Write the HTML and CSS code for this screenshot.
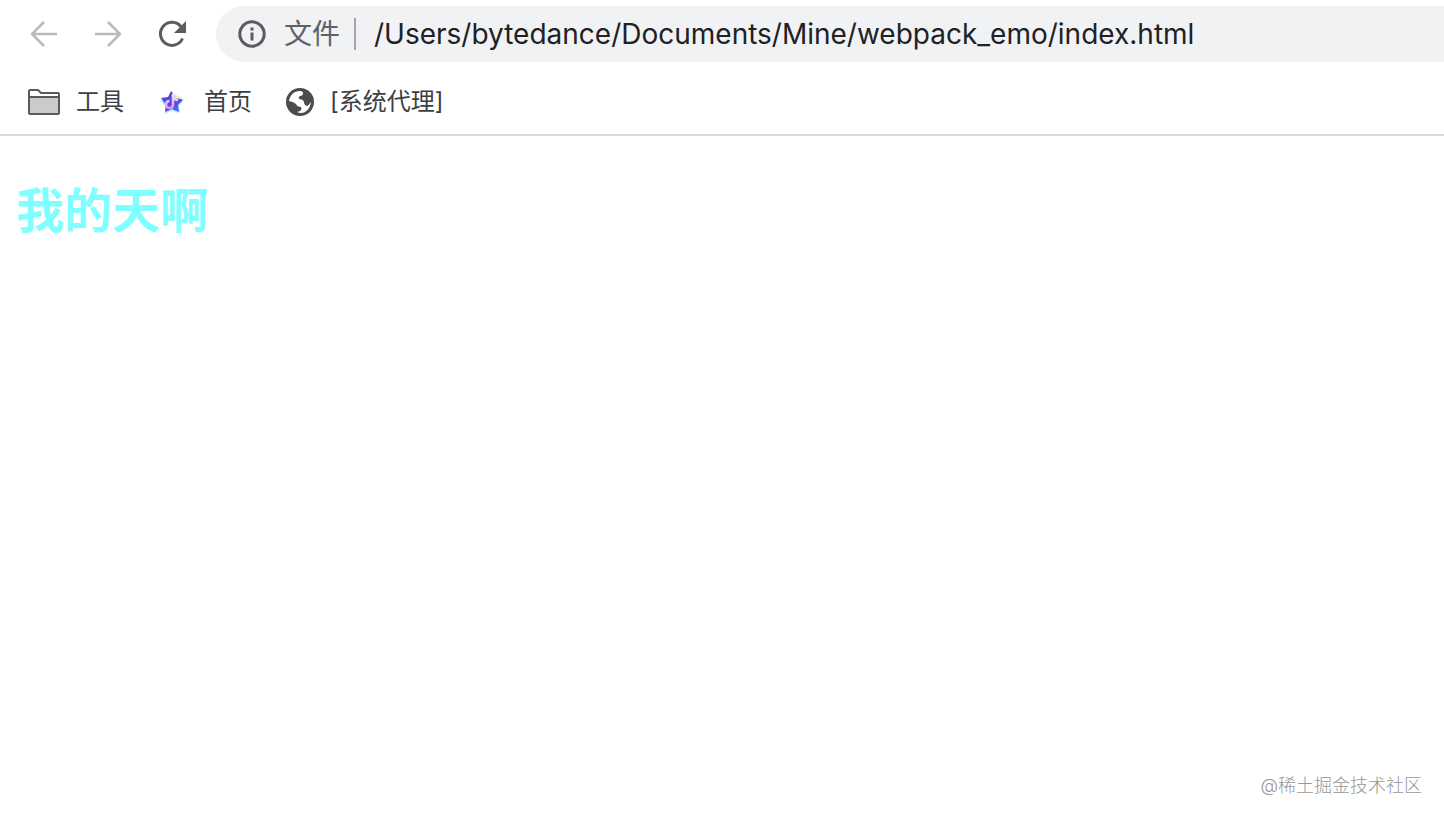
FILE: index.html
```
<!DOCTYPE html>
<html lang="zh-CN">
  <head>
    <meta charset="utf-8">
    <title>index.html</title>
    <link rel="stylesheet" href="styles.css">
  </head>
  <body>
    <header class="browser">
      <div class="toolbar">
        <button class="nav-button" type="button" aria-label="后退" disabled>
          <svg class="nav-icon" viewBox="0 0 32 32"><path d="M29 16H4M16 4L4 16l12 12"/></svg>
        </button>
        <button class="nav-button" type="button" aria-label="前进" disabled>
          <svg class="nav-icon" viewBox="0 0 32 32"><path d="M3 16h25M16 4l12 12-12 12"/></svg>
        </button>
        <button class="nav-button" type="button" aria-label="重新加载">
          <svg class="nav-icon reload" viewBox="0 0 32 32">
            <path d="M26.5 20.5A11.5 11.5 0 1 1 25 8.700"/>
            <path class="reload-head" d="M30 3v12H18z"/>
          </svg>
        </button>
        <div class="omnibox">
          <svg class="info-icon" viewBox="0 0 28 28">
            <circle cx="14" cy="14" r="12.200"/>
            <path d="M14 12.500v8M14 7.500v3"/>
          </svg>
          <label class="scheme" for="url">文件</label>
          <input class="url" id="url" type="text" value="/Users/bytedance/Documents/Mine/webpack_emo/index.html" spellcheck="false">
        </div>
      </div>
      <nav class="bookmarks">
        <a class="bookmark" href="#">
          <svg class="folder-icon" viewBox="0 0 32 26">
            <path fill="#fff" d="M1 9V2q0-1 1-1h8l3 3h17q1 0 1 1v4z"/>
            <path fill="#cbcbcb" d="M1 8h30v16q0 1-1 1H2q-1 0-1-1z"/>
          </svg>
          工具
        </a>
        <a class="bookmark bookmark-home" href="#">
          <svg class="star-icon" viewBox="0 0 24 24">
            <defs>
              <linearGradient id="star-fill" x1="0" y1="0" x2="1" y2="1">
                <stop offset="0" stop-color="#4a49e8"/>
                <stop offset="0.600" stop-color="#5548e2"/>
                <stop offset="1" stop-color="#4e8bff"/>
              </linearGradient>
              <linearGradient id="note-fill" x1="0" y1="0" x2="0" y2="1">
                <stop offset="0" stop-color="#f4f2ff"/>
                <stop offset="1" stop-color="#f08cf0"/>
              </linearGradient>
            </defs>
            <path fill="#a9efff" d="M12 1l4 6 8 2-5 7 1 7-8-2-7 3v-8l-5-6 8-2z"/>
            <path fill="url(#star-fill)" d="M11 1l4 6 8 3-5 5 1 7-7-3-7 3 1-7-5-7 7-1z"/>
            <path fill="#ffe3b5" d="M15 4l3 2 4 1-3 2-4-1z"/>
            <path fill="none" stroke="url(#note-fill)" stroke-width="2.500" d="M13 4v11a3.500 3.500 0 1 1-3.500-4M13 6q1 4 5 4"/>
          </svg>
          首页
        </a>
        <a class="bookmark" href="#">
          <svg class="globe-icon" viewBox="0 0 28 28">
            <circle cx="14" cy="14" r="14" fill="#4a4c4f"/>
            <path fill="#fff" d="M3 13C4 7 8 3 14 3q3 0 3 2 0 3-3 3-2 1-1 3 4 0 5 3 0 3 3 4 2-1 4-4-1 7-6 10-4 2-8 0l3-1q2-1 1-4-4 0-5-3-2-2-7-3z"/>
          </svg>
          [系统代理]
        </a>
      </nav>
    </header>

    <main class="page">
      <h1 class="title">我的天啊</h1>
    </main>
    <footer class="watermark">@稀土掘金技术社区</footer>
  </body>
</html>
```
FILE: styles.css
```
* { box-sizing: border-box; }

body {
  margin: 0;
  min-height: 100vh;
  display: flex;
  flex-direction: column;
  background: #fff;
  font-family: Inter, "Noto Sans CJK SC", sans-serif;
}

.toolbar {
  display: flex;
  align-items: center;
  height: 68px;
  padding-left: 28px;
}

.nav-button {
  width: 32px;
  height: 32px;
  margin-right: 32px;
  padding: 0;
  border: 0;
  background: none;
  color: #5a5c5f;
}
.nav-button:disabled { color: #b9babb; }
.nav-icon {
  display: block;
  width: 32px;
  height: 32px;
  fill: none;
  stroke: currentColor;
  stroke-width: 2.5;
}
.reload { stroke-width: 3; }
.reload-head { fill: currentColor; stroke: none; }

.omnibox {
  flex: 1;
  display: flex;
  align-items: center;
  height: 56px;
  margin-left: -4px;
  padding-left: 22px;
  border-radius: 28px 0 0 28px;
  background: #f1f2f4;
}
.info-icon {
  width: 28px;
  height: 28px;
  margin-right: 18px;
  fill: none;
  stroke: #5a5c5f;
  stroke-width: 3;
}
.scheme {
  padding-right: 14px;
  border-right: 2px solid #a3a5a8;
  color: #5f6165;
  font-size: 28px;
  line-height: 32px;
}
.url {
  flex: 1;
  min-width: 0;
  padding: 0 0 0 18px;
  border: 0;
  outline: 0;
  background: none;
  color: #202124;
  font: inherit;
  font-size: 28px;
}

.bookmarks {
  display: flex;
  align-items: center;
  gap: 36px;
  height: 68px;
  padding: 2px 0 0 28px;
  border-bottom: 2px solid #d9dadb;
}
.bookmark {
  display: flex;
  align-items: center;
  gap: 16px;
  color: #3c4043;
  font-size: 24px;
  line-height: 32px;
  text-decoration: none;
}
.bookmark-home {
  gap: 20px;
  margin-right: -2px;
}
.folder-icon {
  width: 32px;
  height: 26px;
  stroke: #5a5a5a;
  stroke-width: 2;
}
.star-icon { width: 24px; height: 24px; }
.globe-icon { width: 28px; height: 28px; }

.page {
  flex: 1;
  padding: 40px 16px;
}
.title {
  margin: 0;
  color: #7fffff;
  font-size: 48px;
  line-height: 70px;
}

.watermark {
  padding: 0 22px 20px;
  color: #969696;
  font-size: 18px;
  font-weight: 300;
  line-height: 24px;
  text-align: right;
}
```
